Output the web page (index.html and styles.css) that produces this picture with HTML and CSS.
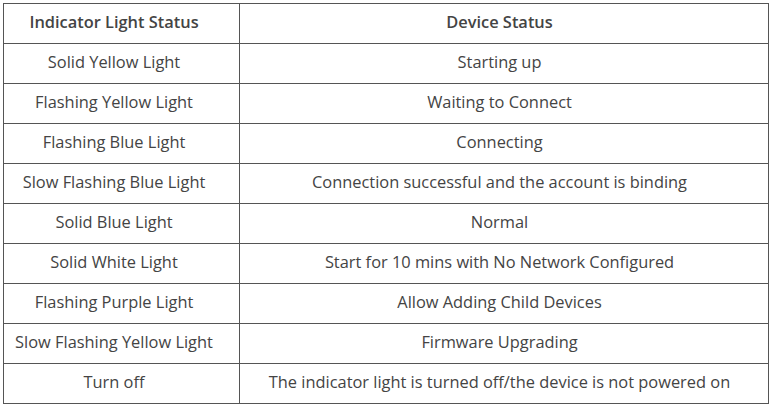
FILE: index.html
```html
<!DOCTYPE html>
<html>
<head>
<meta charset="utf-8">
<link rel="stylesheet" href="styles.css">
</head>
<body>
<table class="status-table">
  <colgroup><col class="col-light"><col class="col-device"></colgroup>
  <thead>
    <tr><th>Indicator Light Status</th><th>Device Status</th></tr>
  </thead>
  <tbody>
    <tr><td>Solid Yellow Light</td><td>Starting up</td></tr>
    <tr><td>Flashing Yellow Light</td><td>Waiting to Connect</td></tr>
    <tr><td>Flashing Blue Light</td><td>Connecting</td></tr>
    <tr><td>Slow Flashing Blue Light</td><td>Connection successful and the account is binding</td></tr>
    <tr><td>Solid Blue Light</td><td>Normal</td></tr>
    <tr><td>Solid White Light</td><td>Start for 10 mins with No Network Configured</td></tr>
    <tr><td>Flashing Purple Light</td><td>Allow Adding Child Devices</td></tr>
    <tr><td>Slow Flashing Yellow Light</td><td>Firmware Upgrading</td></tr>
    <tr><td>Turn off</td><td>The indicator light is turned off/the device is not powered on</td></tr>
  </tbody>
</table>
</body>
</html>
```
FILE: styles.css
```css
html, body {
  margin: 0;
  padding: 0;
  background: #ffffff;
}
body {
  padding: 3px 0 0 3px;
  font-family: "Open Sans", "Noto Sans", sans-serif;
  color: #444444;
}
.status-table {
  border-collapse: collapse;
  width: 766px;
  table-layout: fixed;
}
.col-light { width: 236px; }
.status-table th,
.status-table td {
  border: 1px solid #555555;
  height: 40px;
  padding: 0 9px 3px 0;
  text-align: center;
  vertical-align: middle;
  font-size: 16.4px;
  line-height: 20px;
  box-sizing: border-box;
  white-space: nowrap;
}
.status-table th:first-child,
.status-table td:first-child {
  padding-right: 15px;
}
.status-table th {
  font-weight: 600;
  font-size: 16.4px;
}
```
